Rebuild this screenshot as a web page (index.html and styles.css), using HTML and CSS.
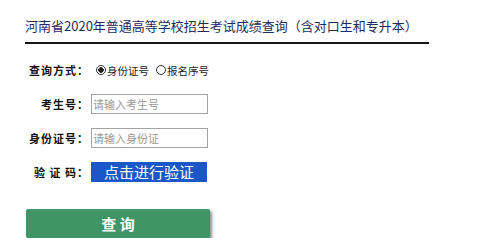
FILE: index.html
```html
<!DOCTYPE html>
<html lang="zh-CN">
<head>
<meta charset="utf-8">
<title>成绩查询</title>
<link rel="stylesheet" href="styles.css">
</head>
<body>
<div class="page">
  <h1 class="title">河南省2020年普通高等学校招生考试成绩查询（含对口生和专升本）</h1>
  <form class="form">
    <label class="lbl">查询方式：</label>
    <div class="radios">
      <label class="opt"><input class="radio" type="radio" name="t" checked><span>身份证号</span></label>
      <label class="opt opt2"><input class="radio" type="radio" name="t"><span>报名序号</span></label>
    </div>
    <label class="lbl">考生号：</label>
    <input class="field" type="text" placeholder="请输入考生号">
    <label class="lbl">身份证号：</label>
    <input class="field" type="text" placeholder="请输入身份证">
    <label class="lbl">验 证 码：</label>
    <div class="verify">点击进行验证</div>
  </form>
  <div class="submit">查 询</div>
</div>
</body>
</html>
```

FILE: styles.css
```css
html, body {
  margin: 0;
  padding: 0;
  background: #ffffff;
}
body {
  font-family: "Noto Sans CJK SC", "Noto Sans", sans-serif;
  color: #222;
}
.page {
  padding-left: 25px;
  padding-top: 18px;
}
.title {
  margin: 0;
  width: 404px;
  font-size: 13px;
  font-weight: normal;
  line-height: 16px;
  color: #1f2d5c;
  padding-bottom: 8px;
  border-bottom: 2px solid #151515;
  white-space: nowrap;
}
.form {
  margin: 16px 0 0 0;
  display: grid;
  grid-template-columns: 64px 120px;
  column-gap: 2px;
  row-gap: 14px;
  grid-auto-rows: 20px;
  align-items: center;
}
.lbl {
  text-align: right;
  font-size: 11px;
  font-weight: bold;
  letter-spacing: 1px;
  color: #111;
  line-height: 20px;
  white-space: pre;
}
.radios {
  display: flex;
  align-items: center;
  font-size: 10.5px;
  color: #222;
  white-space: nowrap;
}
.opt {
  display: flex;
  align-items: center;
  margin-left: 5px;
}
.opt2 {
  margin-left: 7px;
}
.radio {
  appearance: none;
  -webkit-appearance: none;
  margin: 0 1px 0 0;
  width: 10px;
  height: 10px;
  border: 1px solid #333;
  border-radius: 50%;
  background: #fff;
  box-sizing: border-box;
}
.radio:checked {
  background: radial-gradient(circle, #222 0 2.5px, #fff 3px);
}
.field {
  width: 117px;
  height: 20px;
  box-sizing: border-box;
  border: 1px solid #a3a3a3;
  padding: 0 0 0 1px;
  margin: 0;
  font-family: "Noto Sans CJK SC", sans-serif;
  font-size: 11px;
  outline: none;
}
.field::placeholder {
  color: #9a9a9a;
}
.verify {
  width: 116px;
  height: 20px;
  background: #1c57c9;
  color: #fff;
  font-size: 15px;
  line-height: 20px;
  text-align: center;
  white-space: nowrap;
}
.submit {
  margin-top: 27px;
  margin-left: 1px;
  width: 184px;
  height: 29px;
  background: #3f9566;
  color: #fff;
  font-size: 15px;
  font-weight: bold;
  line-height: 29px;
  text-align: center;
  white-space: pre;
  border-radius: 2px;
  box-shadow: 2px 2px 3px rgba(0, 0, 0, 0.45);
}
```
